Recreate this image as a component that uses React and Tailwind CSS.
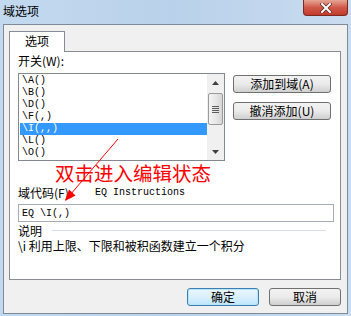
import React from 'react';

const cjk = { fontFamily: '"Noto Sans CJK SC", "Noto Sans", sans-serif' };
const mono = { fontFamily: '"Liberation Mono", "DejaVu Sans Mono", monospace' };

const items = ['\\A()', '\\B()', '\\D()', '\\F(,)', '\\I(,,)', '\\L()', '\\O()'];

const WinButton = ({ children, primary, className = '' }) => (
  <div
    className={`flex items-center justify-center rounded-[3px] border text-[12px] leading-none text-black ${
      primary
        ? 'border-[#3c7fb1] bg-gradient-to-b from-[#eaf6fd] via-[#d9f0fc] to-[#bee6fd] shadow-[0_0_0_1px_#b8e4fa_inset]'
        : 'border-[#707070] bg-gradient-to-b from-[#f2f2f2] via-[#ebebeb] to-[#cfcfcf]'
    } ${className}`}
  >
    {children}
  </div>
);

const App = () => (
  <div
    className="relative w-[351px] h-[316px] overflow-hidden bg-gradient-to-r from-[#c3d9ef] via-[#b9d1ea] to-[#c9dcf0]"
    style={cjk}
  >
    {/* title bar */}
    <div className="flex h-[24px] items-start justify-between">
      <div className="pl-[3px] pt-[4px] text-[12px] leading-[14px] text-black">域选项</div>
      <div className="mr-[3px] flex h-[16px] w-[45px] items-center justify-center rounded-b-[4px] border border-t-0 border-[#7a2a20] bg-gradient-to-b from-[#e4a595] via-[#d0584a] to-[#c23b2a]">
        <svg width="12" height="10" viewBox="0 0 12 10">
          <path d="M2 1 L10 9 M10 1 L2 9" stroke="#5a2a26" strokeWidth="3.4" strokeLinecap="square" />
          <path d="M2 1 L10 9 M10 1 L2 9" stroke="#ffffff" strokeWidth="2" strokeLinecap="square" />
        </svg>
      </div>
    </div>

    {/* client area */}
    <div className="mx-[3px] h-[290px] border border-[#7d8a9c] bg-[#f0f0f0] pl-[5px] pt-[6px]">
      <div className="relative z-10 -mb-px flex h-[21px] w-[56px] items-center justify-center border-x border-t border-[#898c95] bg-white pb-[2px] text-[12px] text-black">
        选项
      </div>
      <div className="h-[229px] w-[332px] border border-[#898c95] bg-white px-[8px] pt-[2px] text-[12px] text-black">
        <div className="leading-[14px]">开关(W):</div>

        <div className="mt-[5px] flex items-start">
          {/* listbox */}
          <div className="flex h-[88px] w-[207px] border border-[#828790] bg-white">
            <div className="w-[188px] pt-[1px]" style={mono}>
              {items.map((it, i) => (
                <div
                  key={it}
                  className={`ml-px h-[12px] pl-[2px] text-[10px] leading-[12px] ${
                    i === 4 ? 'bg-[#3399ff] text-white' : 'text-black'
                  }`}
                >
                  {it}
                </div>
              ))}
            </div>
            <div className="flex w-[17px] flex-col items-center bg-[#f0f0f0]">
              <div className="flex h-[17px] w-full items-center justify-center">
                <svg width="7" height="4" viewBox="0 0 7 4">
                  <path d="M0 4 L3.5 0 L7 4 Z" fill="#404040" />
                </svg>
              </div>
              <div className="mt-[2px] flex h-[32px] w-[15px] flex-col items-center justify-center gap-[1px] rounded-[2px] border border-[#9a9a9a] bg-gradient-to-r from-[#f4f4f4] via-[#e8e8e8] to-[#d6d6d6]">
                <div className="h-px w-[7px] bg-[#5c5c5c]" />
                <div className="h-px w-[7px] bg-[#5c5c5c]" />
                <div className="h-px w-[7px] bg-[#5c5c5c]" />
                <div className="h-px w-[7px] bg-[#5c5c5c]" />
              </div>
              <div className="mt-auto flex h-[17px] w-full items-center justify-center">
                <svg width="7" height="4" viewBox="0 0 7 4">
                  <path d="M0 0 L3.5 4 L7 0 Z" fill="#404040" />
                </svg>
              </div>
            </div>
          </div>

          <div className="ml-[8px] mt-[2px] flex flex-col gap-[9px]">
            <WinButton className="h-[18px] w-[98px]">添加到域(A)</WinButton>
            <WinButton className="h-[18px] w-[98px]">撤消添加(U)</WinButton>
          </div>
        </div>

        <div className="mt-[25px] flex leading-[14px]">
          <div className="w-[77px]">域代码(F):</div>
          <div className="text-[10px]" style={mono}>EQ Instructions</div>
        </div>

        <div
          className="mt-[4px] flex h-[18px] w-[316px] items-center border border-[#a5acb5] pl-[3px] text-[10px]"
          style={mono}
        >
          EQ \I(,)
        </div>

        <div className="mt-[2px] flex h-[13px] items-center leading-[13px]">
          <div className="w-[34px]">说明</div>
          <div className="mr-[6px] h-px flex-1 bg-[#d5dfe5]" />
        </div>
        <div className="mt-[2px] leading-[13px]">\i 利用上限、下限和被积函数建立一个积分</div>
      </div>

      <div className="mt-[8px] flex w-[332px] justify-end gap-[10px]">
        <WinButton primary className="h-[18px] w-[72px]">确定</WinButton>
        <WinButton className="h-[18px] w-[72px]">取消</WinButton>
      </div>
    </div>

    {/* red annotation drawn over the dialog */}
    <div className="absolute left-[55px] top-[163px] text-[19.5px] leading-none text-[#ff0000]">
      双击进入编辑状态
    </div>
    <svg className="pointer-events-none absolute left-0 top-0" width="351" height="316">
      <line x1="118" y1="139" x2="70" y2="195" stroke="#ff0000" strokeWidth="1" />
      <polygon points="65,201 75.5,195.5 69,189.5" fill="#ff0000" />
    </svg>
  </div>
);

export default App;
